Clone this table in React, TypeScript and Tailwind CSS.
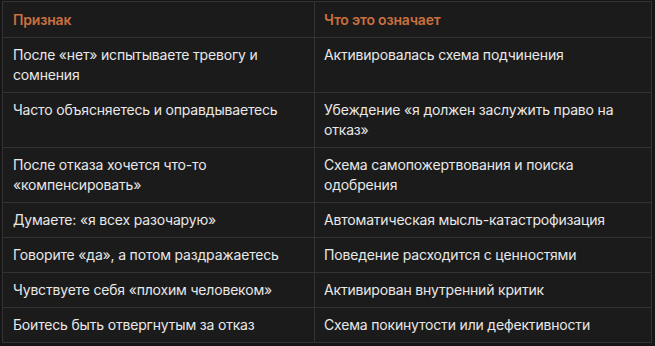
import React from "react";

const rows: [string, string][] = [
  ["После «нет» испытываете тревогу и сомнения", "Активировалась схема подчинения"],
  ["Часто объясняетесь и оправдываетесь", "Убеждение «я должен заслужить право на отказ»"],
  ["После отказа хочется что-то «компенсировать»", "Схема самопожертвования и поиска одобрения"],
  ["Думаете: «я всех разочарую»", "Автоматическая мысль-катастрофизация"],
  ["Говорите «да», а потом раздражаетесь", "Поведение расходится с ценностями"],
  ["Чувствуете себя «плохим человеком»", "Активирован внутренний критик"],
  ["Боитесь быть отвергнутым за отказ", "Схема покинутости или дефективности"],
];

export default function App() {
  return (
    <div
      className="w-[655px] h-[346px] bg-[#161616] pl-[2px] pt-[1px]"
      style={{ fontFamily: "Inter, 'Noto Sans', sans-serif" }}
    >
      <table className="w-[650px] border-collapse table-fixed bg-[#1b1b1b] text-[14px] leading-[20px] tracking-[-0.18px] text-[#e8e8e8]">
        <colgroup>
          <col className="w-[312px]" />
          <col />
        </colgroup>
        <thead>
          <tr>
            <th className="border border-[#333333] px-[10px] pt-[8px] pb-[7px] text-left font-semibold text-[#c8703f]">
              Признак
            </th>
            <th className="border border-[#333333] px-[9px] pt-[8px] pb-[7px] text-left font-semibold text-[#c8703f]">
              Что это означает
            </th>
          </tr>
        </thead>
        <tbody>
          {rows.map(([a, b], i) => (
            <tr key={i}>
              <td className="border border-[#333333] px-[10px] py-[7px] align-top">{a}</td>
              <td className="border border-[#333333] px-[9px] py-[7px] align-top">{b}</td>
            </tr>
          ))}
        </tbody>
      </table>
    </div>
  );
}
